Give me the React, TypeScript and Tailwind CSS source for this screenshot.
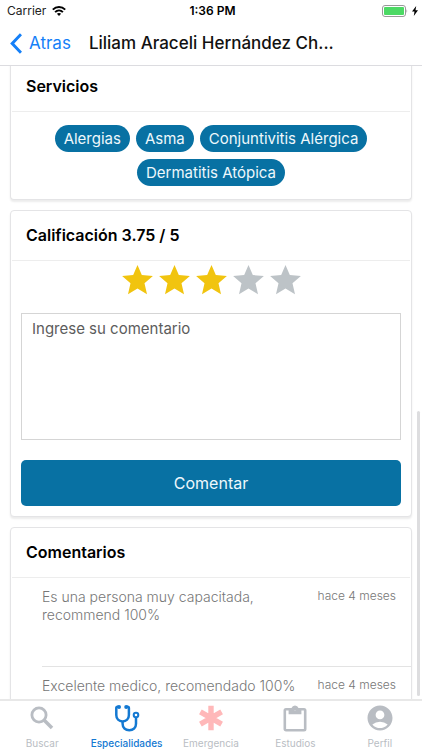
import type { ReactNode } from "react";
import { IoMdStar } from "react-icons/io";
import { MdAccountCircle } from "react-icons/md";

const services = ["Alergias", "Asma", "Conjuntivitis Alérgica", "Dermatitis Atópica"];

const comments = [
  { text: "Es una persona muy capacitada, recommend 100%", date: "hace 4 meses" },
  { text: "Excelente medico, recomendado 100%", date: "hace 4 meses" },
];

function SearchIcon() {
  return (
    <svg viewBox="0 0 24 24" className="h-6 w-6" fill="none" stroke="currentColor">
      <circle cx="9" cy="9" r="7.1" strokeWidth="2.8" />
      <path d="M14 14 22 22" strokeWidth="3.6" />
    </svg>
  );
}

function Stethoscope() {
  return (
    <svg viewBox="0 0 26 28" className="h-7 w-[26px]" fill="none" stroke="currentColor" strokeWidth="2.5">
      <path d="M4.5 2.8H3.6Q2.3 2.8 2.3 4.1V11C2.3 15 5 17.4 8.6 17.4S14.9 15 14.9 11V4.1Q14.9 2.8 13.6 2.8H12.7" />
      <path d="M8.6 17.4V19.8C8.6 23.9 11.5 26.2 15.3 26.2S22 23.9 22 19.8V13.5" />
      <circle cx="5" cy="2.9" r="2" fill="currentColor" stroke="none" />
      <circle cx="12.2" cy="2.9" r="2" fill="currentColor" stroke="none" />
      <circle cx="22" cy="11" r="2.3" strokeWidth="2" />
    </svg>
  );
}

function Asterisk() {
  return (
    <svg viewBox="0 0 26 26" className="h-[26px] w-[26px] text-[#ffb8b9]" stroke="currentColor" strokeWidth="5.4">
      <path d="M13 .8V25.200M2.400 6.900 23.600 19.100M23.600 6.900 2.400 19.100" />
    </svg>
  );
}

function Clipboard() {
  return (
    <svg viewBox="0 0 24 27" className="h-[27px] w-6">
      <rect x="1.8" y="4.3" width="20.4" height="21" rx="1.2" fill="none" stroke="currentColor" strokeWidth="2.6" />
      <path
        d="M5.600 3H8.500A3.700 3.700 0 0 1 15.500 3H18.400V9.200H5.600ZM12 2.900A1.300 1.300 0 1 0 12 5.500 1.300 1.300 0 1 0 12 2.900Z"
        fill="currentColor"
        fillRule="evenodd"
      />
    </svg>
  );
}

function StatusBar() {
  return (
    <div className="grid h-[22px] grid-cols-3 items-center pr-1 pl-[7px] text-xs text-[#222]">
      <div className="flex items-center gap-[6px]">
        Carrier
        <svg viewBox="0 0 14 10" className="h-[10px] w-[14px]" fill="none" stroke="black" strokeWidth="2">
          <path d="M.8 3.600C4.300.2 9.700.2 13.200 3.600M3.100 6.100C5.300 4 8.700 4 10.900 6.100" />
          <path d="M7 10 4.900 7.800Q7 6.200 9.100 7.800Z" fill="black" stroke="none" />
        </svg>
      </div>
      <div className="text-center font-semibold text-black">1:36 PM</div>
      <div className="flex items-center justify-end gap-1">
        <svg viewBox="0 0 26 12" className="h-3 w-[26px]">
          <rect x=".5" y=".5" width="23" height="11" rx="2.500" fill="none" stroke="#999" />
          <rect x="2" y="2" width="20" height="8" rx="1" fill="#4cd964" />
          <path d="M24.500 4Q26 6 24.500 8Z" fill="#999" />
        </svg>
        <svg viewBox="0 0 6 10" className="h-[10px] w-[6px]">
          <path d="M4.200 0 0 5.600H2.500L1.800 10 6 4.300H3.500Z" />
        </svg>
      </div>
    </div>
  );
}

function Card({ title, children, className = "" }: { title: string; children: ReactNode; className?: string }) {
  return (
    <section className={`shrink-0 rounded-sm border-[#e4e4e6] bg-white shadow-[0_2px_2px_rgba(0,0,0,0.08)] ${className}`}>
      <h2 className="mx-px border-b border-[#ededed] px-[14px] py-3 text-base leading-[25px] font-semibold text-black">
        {title}
      </h2>
      {children}
    </section>
  );
}

const tabs = [
  { label: "Buscar", icon: <SearchIcon />, color: "text-[#b9bdc3]" },
  { label: "Especialidades", icon: <Stethoscope />, color: "text-[#1479d2] font-medium" },
  { label: "Emergencia", icon: <Asterisk />, color: "text-[#b9bdc3]" },
  { label: "Estudios", icon: <Clipboard />, color: "text-[#b9bdc3]" },
  { label: "Perfil", icon: <MdAccountCircle size={30} />, color: "text-[#b9bdc3]" },
];

export default function App() {
  return (
    <div className="relative flex h-screen flex-col overflow-hidden bg-white font-['Inter',sans-serif]">
      <header className="shrink-0 border-b border-[#dcdce0]">
        <StatusBar />
        <div className="flex h-[43px] items-center gap-[18px] pl-[10px]">
          <button className="flex items-center gap-[7px] text-[17px] text-[#1580f8]">
            <svg viewBox="0 0 12 21" className="h-[21px] w-3" fill="none" stroke="currentColor" strokeWidth="3">
              <path d="M11 1.200 2.200 10.500 11 19.800" />
            </svg>
            Atras
          </button>
          <h1 className="truncate text-[17px] font-medium text-[#111]">Liliam Araceli Hernández Ch...</h1>
        </div>
      </header>

      <main className="flex min-h-0 flex-1 flex-col gap-[10px] overflow-hidden px-[10px]">
        <Card title="Servicios" className="-mt-1 rounded-t-none border-x border-b">
          <ul className="flex flex-wrap justify-center gap-x-[6px] gap-y-[7px] px-8 py-[13px] text-[15px] text-[#eef8fc]">
            {services.map((service) => (
              <li key={service} className="rounded-full bg-[#0871a3] px-[9px] leading-[27px]">
                {service}
              </li>
            ))}
          </ul>
        </Card>

        <Card title="Calificación 3.75 / 5" className="border">
          <div className="px-[10px] pb-[10px]">
            <div className="flex h-[52px] justify-center gap-px">
              {[1, 2, 3, 4, 5].map((star) => (
                <button key={star} aria-label={`${star} / 5`} className="flex h-9 w-9 items-center justify-center">
                  <IoMdStar size={39} className={`shrink-0 ${star <= 3 ? "text-[#f1c40f]" : "text-[#bdc3c7]"}`} />
                </button>
              ))}
            </div>
            <textarea
              aria-label="Ingrese su comentario"
              placeholder="Ingrese su comentario"
              className="block h-[127px] w-full resize-none border border-[#d5d5d5] px-[10px] py-1 text-[15px] leading-[22px] placeholder:text-[#5c5c5c]"
            />
            <button className="mt-5 h-[46px] w-full rounded-[5px] bg-[#0871a3] text-base text-[#eef8fc]">
              Comentar
            </button>
          </div>
        </Card>

        <Card title="Comentarios" className="border">
          <ul className="pl-[31px]">
            {comments.map((comment) => (
              <li
                key={comment.text}
                className="flex h-[89px] justify-between border-b border-[#e3e3e3] pt-[10px] pr-[15px] text-[#777]"
              >
                <p className="max-w-[260px] text-[14px] leading-[18px] font-light">{comment.text}</p>
                <time className="shrink-0 text-xs leading-4 font-light">{comment.date}</time>
              </li>
            ))}
          </ul>
        </Card>
      </main>

      <nav className="z-10 grid h-[51px] shrink-0 grid-cols-5 border-t-2 border-[#e8e8e8] bg-white">
        {tabs.map((tab) => (
          <a key={tab.label} href="#" className={`flex flex-col items-center gap-[2px] text-[10px] ${tab.color}`}>
            <span className="flex h-[34px] items-center">{tab.icon}</span>
            <span className="leading-3">{tab.label}</span>
          </a>
        ))}
      </nav>

      <div className="absolute right-[2px] bottom-[54px] h-[285px] w-[3px] rounded-full bg-[#dddddf]" />
    </div>
  );
}
